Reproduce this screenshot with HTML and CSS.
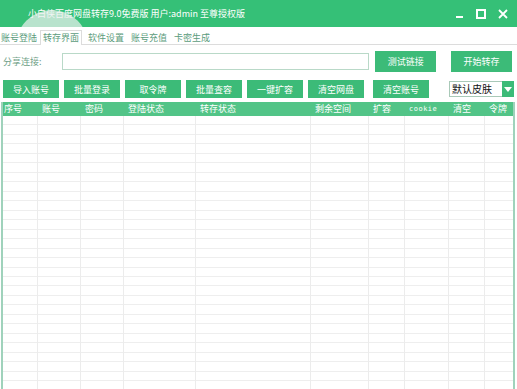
FILE: index.html
```html
<!DOCTYPE html>
<html lang="zh-CN">
<head>
    <meta charset="UTF-8">
    <meta name="viewport" content="width=device-width, initial-scale=1.0">
    <title>小白侠百度网盘转存</title>
    <link rel="stylesheet" href="styles.css">
</head>
<body>
    <div class="window">
        <div class="titlebar">
            <span class="title">小白侠百度网盘转存9.0免费版 用户:admin 至尊授权版</span>
            <div class="glare"></div>
            <div class="controls">
                <span class="ctl min"></span>
                <span class="ctl max"></span>
                <span class="ctl close">
                    <svg width="10" height="10" viewBox="0 0 10 10"><path d="M1 1 L9 9 M9 1 L1 9" stroke="#fff" stroke-width="1.8"/></svg>
                </span>
            </div>
        </div>

        <div class="tabs">
            <span class="tab">账号登陆</span>
            <span class="tab active">转存界面</span>
            <span class="tab">软件设置</span>
            <span class="tab">账号充值</span>
            <span class="tab">卡密生成</span>
        </div>

        <div class="link-row">
            <label for="share">分享连接:</label>
            <input type="text" id="share">
            <button class="btn btn-test">测试链接</button>
            <button class="btn btn-start">开始转存</button>
        </div>

        <div class="tool-row">
            <button class="btn">导入账号</button>
            <button class="btn">批量登录</button>
            <button class="btn">取令牌</button>
            <button class="btn">批量查容</button>
            <button class="btn">一键扩容</button>
            <button class="btn">清空网盘</button>
            <button class="btn btn-wide">清空账号</button>
            <div class="skin">
                <span class="skin-text">默认皮肤</span>
                <span class="skin-arrow"></span>
            </div>
        </div>

        <div class="grid">
            <div class="grid-head">
                <span class="c1">序号</span>
                <span class="c2">账号</span>
                <span class="c3">密码</span>
                <span class="c4">登陆状态</span>
                <span class="c5">转存状态</span>
                <span class="c6">剩余空间</span>
                <span class="c7">扩容</span>
                <span class="c8 latin">cookie</span>
                <span class="c9">清空</span>
                <span class="c10">令牌</span>
            </div>
            <div class="grid-body">
                <span class="c1"></span>
                <span class="c2"></span>
                <span class="c3"></span>
                <span class="c4"></span>
                <span class="c5"></span>
                <span class="c6"></span>
                <span class="c7"></span>
                <span class="c8"></span>
                <span class="c9"></span>
                <span class="c10"></span>
            </div>
        </div>
    </div>
</body>
</html>
```

FILE: styles.css
```css
body {
    margin: 0;
    padding: 0;
    background-color: #fff;
    font-family: "Noto Sans CJK SC", "Noto Sans", sans-serif;
    overflow: hidden;
}
.window {
    width: 517px;
    height: 389px;
    display: flex;
    flex-direction: column;
    overflow: hidden;
}
.titlebar {
    position: relative;
    height: 27px;
    background-color: #35c077;
    display: flex;
    align-items: center;
    padding-left: 28px;
    flex-shrink: 0;
    overflow: hidden;
}
/* blurred highlight over the title start */
.glare {
    position: absolute;
    left: 16px;
    top: 10px;
    width: 72px;
    height: 72px;
    border-radius: 50%;
    background-color: rgba(236, 240, 238, 0.72);
}
.title {
    color: #fff;
    font-size: 9px;
}
.controls {
    margin-left: auto;
    display: flex;
    align-items: center;
    gap: 12px;
    padding-right: 9px;
}
.ctl {
    width: 10px;
    height: 10px;
    display: flex;
    align-items: center;
    justify-content: center;
}
.min::before {
    content: "";
    width: 7px;
    height: 2px;
    margin-top: 6px;
    background-color: #fff;
}
.max::before {
    content: "";
    width: 6px;
    height: 6px;
    border: 2px solid #fff;
}
.tabs {
    height: 14px;
    margin-top: 3px;
    display: flex;
    align-items: flex-end;
    border-bottom: 1px solid #dcdcdc;
    flex-shrink: 0;
}
.tab {
    font-size: 9px;
    line-height: 12px;
    color: #5c9c7c;
    padding: 0 1px;
    margin-right: 5px;
}
.tab.active {
    height: 14px;
    line-height: 14px;
    padding: 0 2px;
    margin: 0 5px -1px -3px;
    border: 1px solid #dcdcdc;
    border-bottom: none;
    background-color: #fff;
}
.link-row {
    display: flex;
    align-items: center;
    margin-top: 6px;
    height: 21px;
    padding-left: 3px;
    flex-shrink: 0;
}
.link-row label {
    width: 59px;
    font-size: 9px;
    color: #6f9f87;
}
.link-row input {
    width: 306px;
    height: 15px;
    padding: 0;
    border: 1px solid #b9d9c8;
    outline: none;
}
.btn {
    height: 18px;
    padding: 0;
    border: none;
    background-color: #3cbb78;
    color: #fff;
    font-family: "Noto Sans CJK SC", "Noto Sans", sans-serif;
    font-size: 9px;
    margin-right: 5px;
    width: 56px;
}
.btn-test {
    height: 21px;
    width: 61px;
    margin-left: 6px;
    margin-right: 15px;
}
.btn-start {
    height: 21px;
    width: 61px;
}
.tool-row {
    display: flex;
    align-items: center;
    margin-top: 8px;
    padding-left: 3px;
    flex-shrink: 0;
}
.btn-wide {
    margin-left: 4px;
    margin-right: 20px;
}
.skin {
    display: flex;
    height: 16px;
}
.skin-text {
    width: 50px;
    border: 1px solid #a9c9b8;
    border-right: none;
    font-size: 10px;
    line-height: 14px;
    padding-left: 2px;
    color: #111;
}
.skin-arrow {
    width: 12px;
    background-color: #3cbb78;
    display: flex;
    align-items: center;
    justify-content: center;
}
.skin-arrow::before {
    content: "";
    border-left: 4px solid transparent;
    border-right: 4px solid transparent;
    border-top: 5px solid #fff;
}
.grid {
    margin: 4px 2px 0 1px;
    flex: 1;
    display: flex;
    flex-direction: column;
    border-left: 2px solid #9fd2bb;
    border-right: 2px solid #9fd2bb;
}
.grid-head, .grid-body {
    display: flex;
}
.grid-head {
    height: 14px;
    background-color: #52c487;
}
.grid-head span {
    font-size: 9px;
    line-height: 14px;
    color: #fff;
    padding-left: 4px;
    box-sizing: border-box;
}
.grid-head .c1 {
    padding-left: 1px;
}
.grid-head .latin {
    font-family: "DejaVu Sans Mono", monospace;
    font-size: 7px;
    letter-spacing: 0.5px;
}
.grid-body {
    flex: 1;
    background-image: repeating-linear-gradient(to bottom, transparent 0, transparent 8.5px, #eeeeee 8.5px, #eeeeee 9.47px);
}
.grid-body span {
    border-right: 1px solid #ececec;
    box-sizing: border-box;
}
.c1 { width: 35px; }
.c2 { width: 43px; }
.c3 { width: 43px; }
.c4 { width: 72px; }
.c5 { width: 115px; }
.c6 { width: 58px; }
.c7 { width: 36px; }
.c8 { width: 44px; }
.c9 { width: 36px; }
.c10 { width: 28px; }
.grid-body .c10 {
    border-right: none;
}
```
